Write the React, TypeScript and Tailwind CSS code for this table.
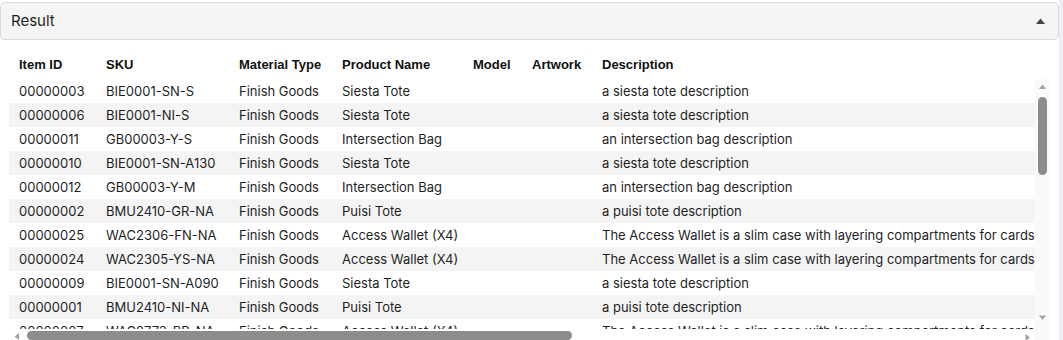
const columns = [
  { label: 'Item ID', w: 'w-[87px]' },
  { label: 'SKU', w: 'w-[133px]' },
  { label: 'Material Type', w: 'w-[103px]' },
  { label: 'Product Name', w: 'w-[131px]' },
  { label: 'Model', w: 'w-[59px]' },
  { label: 'Artwork', w: 'w-[70px]' },
  { label: 'Description', w: 'w-[1290px]' },
]

const siesta = 'a siesta tote description'
const inter = 'an intersection bag description'
const puisi = 'a puisi tote description'
const wallet =
  'The Access Wallet is a slim case with layering compartments for cards while keeping your cash and receipts neatly organized.'

const rows: [string, string, string, string][] = [
  ['00000003', 'BIE0001-SN-S', 'Siesta Tote', siesta],
  ['00000006', 'BIE0001-NI-S', 'Siesta Tote', siesta],
  ['00000011', 'GB00003-Y-S', 'Intersection Bag', inter],
  ['00000010', 'BIE0001-SN-A130', 'Siesta Tote', siesta],
  ['00000012', 'GB00003-Y-M', 'Intersection Bag', inter],
  ['00000002', 'BMU2410-GR-NA', 'Puisi Tote', puisi],
  ['00000025', 'WAC2306-FN-NA', 'Access Wallet (X4)', wallet],
  ['00000024', 'WAC2305-YS-NA', 'Access Wallet (X4)', wallet],
  ['00000009', 'BIE0001-SN-A090', 'Siesta Tote', siesta],
  ['00000001', 'BMU2410-NI-NA', 'Puisi Tote', puisi],
  ['00000007', 'WAC2773-BR-NA', 'Access Wallet (X4)', wallet],
]

// scrollbar arrow glyph
function Arrow({ dir }: { dir: 'up' | 'down' | 'left' | 'right' }) {
  const d = {
    up: 'M0 5 L3.5 0.5 L7 5 Z',
    down: 'M0 0.5 L3.5 5 L7 0.5 Z',
    left: 'M5 0 L0.5 3.5 L5 7 Z',
    right: 'M0.5 0 L5 3.5 L0.5 7 Z',
  }[dir]
  const vertical = dir === 'up' || dir === 'down'
  return (
    <svg width={vertical ? 7 : 5} height={vertical ? 5 : 7} viewBox={vertical ? '0 0 7 5' : '0 0 5 7'}>
      <path d={d} fill="#a3a3a3" />
    </svg>
  )
}

export default function App() {
  return (
    <div className="flex h-[340px] w-[1063px] overflow-hidden bg-[#eeeef5] font-['Inter',sans-serif] text-[#1f1f1f]">
      <div className="flex w-[1059px] flex-col bg-white">
        <div className="mt-[2px] flex h-[38px] shrink-0 items-center justify-between rounded-[5px] border border-[#dadada] bg-[#f5f5f5] pl-[10px] pr-[13px]">
          <span className="text-[15px]">Result</span>
          <svg width="9" height="6" viewBox="0 0 9 6" className="mb-[1px]">
            <path d="M0 6 L4.5 0.5 L9 6 Z" fill="#444" />
          </svg>
        </div>

        <div className="flex min-h-0 flex-1 flex-col px-[9px]">
          <div className="mt-[13px] mb-[2px] flex h-[24px] shrink-0 items-center overflow-hidden whitespace-nowrap font-['Liberation_Sans',Arial,sans-serif] text-[13px] font-bold text-[#111]">
            {columns.map((c) => (
              <div key={c.label} className={`${c.w} shrink-0 pl-[10px]`}>
                {c.label}
              </div>
            ))}
          </div>

          <div className="flex min-h-0 flex-1">
            <div className="relative min-w-0 flex-1 overflow-hidden">
              <div className="w-max text-[13px]">
                {rows.map((r, i) => (
                  <div
                    key={r[0]}
                    className={`flex h-[24px] items-center whitespace-nowrap pt-[2px] ${i % 2 === 1 ? 'bg-[#f4f4f4]' : 'bg-white'}`}
                  >
                    <div className="w-[87px] shrink-0 pl-[10px]">{r[0]}</div>
                    <div className="w-[133px] shrink-0 pl-[10px]">{r[1]}</div>
                    <div className="w-[103px] shrink-0 pl-[10px]">Finish Goods</div>
                    <div className="w-[131px] shrink-0 pl-[10px]">{r[2]}</div>
                    <div className="w-[59px] shrink-0 pl-[10px]"></div>
                    <div className="w-[70px] shrink-0 pl-[10px]"></div>
                    <div className="w-[1290px] shrink-0 overflow-hidden pl-[10px]">{r[3]}</div>
                  </div>
                ))}
              </div>

              {/* horizontal scrollbar, overlaid on the last row */}
              <div className="absolute bottom-0 left-0 right-0 flex h-[11px] items-start bg-white pt-[2px]">
                <div className="flex w-[15px] justify-center pt-[2px]">
                  <Arrow dir="left" />
                </div>
                <div className="ml-[3px] h-[9px] w-[545px] rounded-full bg-[#8c8c8c]" />
                <div className="flex-1" />
                <div className="flex w-[15px] justify-center pt-[3px]">
                  <Arrow dir="right" />
                </div>
              </div>
            </div>

            {/* vertical scrollbar */}
            <div className="flex w-[15px] shrink-0 flex-col items-center bg-[#fafafa] pb-[15px]">
              <div className="flex h-[15px] items-center justify-center">
                <Arrow dir="up" />
              </div>
              <div className="mt-[3px] h-[78px] w-[9px] rounded-full bg-[#8c8c8c]" />
              <div className="flex-1" />
              <div className="flex h-[15px] items-center justify-center">
                <Arrow dir="down" />
              </div>
            </div>
          </div>
        </div>
      </div>
    </div>
  )
}
